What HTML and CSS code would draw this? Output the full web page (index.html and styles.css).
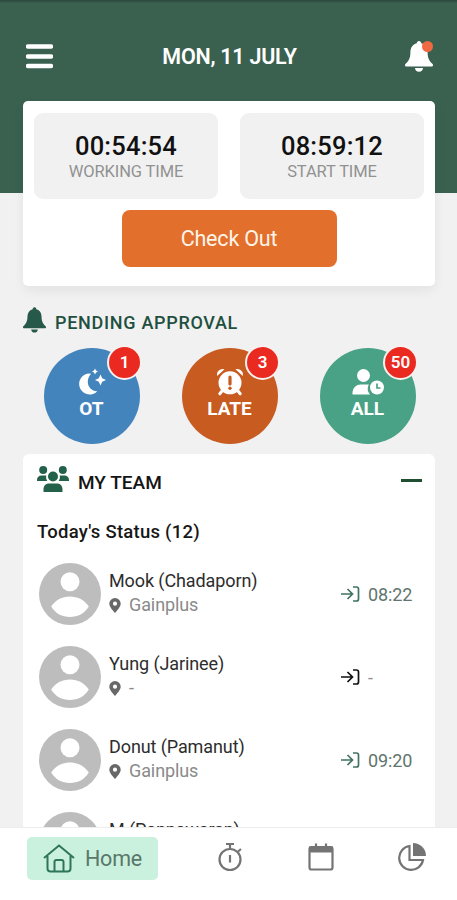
FILE: index.html
```html
<!DOCTYPE html>
<html lang="en">
<head>
<meta charset="utf-8">
<meta name="viewport" content="width=device-width, initial-scale=1">
<title>Attendance</title>
<link rel="stylesheet" href="styles.css">
</head>
<body>
<svg class="defs" width="0" height="0">
  <symbol id="bell" viewBox="0 0 28 31"><path d="M14 0c-1.400 0-2.200 1-2.200 2.300C7.500 3.400 5.400 7 5.400 11.500c0 6-2 9-5 11.500-.8.800-.4 2.500 1 2.500h25.200c1.400 0 1.800-1.700 1-2.500-3-2.500-5-5.500-5-11.500 0-4.500-2.100-8.100-6.400-9.200C16.200 1 15.400 0 14 0zM10 27h8c0 2.200-1.700 3.800-4 3.800S10 29.200 10 27z"/></symbol>
  <symbol id="avatar" viewBox="0 0 62 62"><circle cx="31" cy="31" r="31" fill="#bdbdbd"/><circle cx="31" cy="18.800" r="9.500" fill="#fff"/><path d="M12.200 43.500C16.500 37 23 33.500 31 33.500s14.500 3.500 18.800 10C45.500 50.500 39 54 31 54s-14.500-3.500-18.800-10.500z" fill="#fff"/></symbol>
  <symbol id="pin" viewBox="0 0 12 15"><path fill-rule="evenodd" d="M6 0a5.700 5.700 0 0 0-5.700 5.700C.300 9 4.500 13 6 15c1.500-2 5.700-6 5.700-9.300A5.700 5.700 0 0 0 6 0zm0 3.600a2.100 2.100 0 1 1 0 4.200 2.100 2.100 0 0 1 0-4.200z"/></symbol>
  <symbol id="enter" viewBox="0 0 19 16"><path d="M0 8h11.500M6.500 3l5 5-5 5M12 1h3.500q2 0 2 2v10q0 2-2 2H12" fill="none" stroke="currentColor" stroke-width="1.700"/></symbol>
</svg>
<div class="screen">
  <header class="topbar">
    <svg class="menu" viewBox="0 0 27 25"><path d="M2 2.500h23M2 12.500h23M2 22h23"/></svg>
    <h1 class="date">MON, 11 JULY</h1>
    <div class="alerts"><svg class="alert-bell"><use href="#bell"/></svg><span class="dot"></span></div>
  </header>

  <section class="clock">
    <div class="tiles">
      <div class="tile"><b class="tile-time">00:54:54</b><span class="tile-label">WORKING TIME</span></div>
      <div class="tile"><b class="tile-time">08:59:12</b><span class="tile-label">START TIME</span></div>
    </div>
    <button class="checkout">Check Out</button>
  </section>

  <h2 class="pending"><svg class="pending-bell"><use href="#bell"/></svg><span>PENDING APPROVAL</span></h2>
  <div class="approvals">
    <div class="approval blue">
      <svg class="approval-icon" viewBox="0 0 32 28"><path d="M13.500 5.500a10.500 10.500 0 1 0 7.800 17.700C13.500 23.500 8 14 15 5.800zM19 .500l1 2 2 1-2 1-1 2-1-2-2-1 2-1zM24.500 6.500l1.700 3.800L30 12l-3.800 1.700-1.700 3.800-1.700-3.800L19 12l3.800-1.700z"/></svg>
      <span>OT</span><em class="badge">1</em>
    </div>
    <div class="approval orange">
      <svg class="approval-icon" viewBox="0 0 32 28"><path d="M3.200 8C2 3.500 6.500 0 10.500 1.200zM28.800 8C30 3.500 25.500 0 21.500 1.200z"/><circle cx="16" cy="14.800" r="11.500"/><path class="rounded" d="M8 23l-2.200 2.800M24 23l2.200 2.800"/><path class="mark" d="M16 9v7"/><circle class="mark-dot" cx="16" cy="20.300" r="1.700"/></svg>
      <span>LATE</span><em class="badge">3</em>
    </div>
    <div class="approval green">
      <svg class="approval-icon" viewBox="0 0 32 28"><circle cx="11.500" cy="7.500" r="6.500"/><path d="M.500 26.500V24a8 8 0 0 1 8-7.500h8.300a9 9 0 0 0 1.200 10z"/><circle cx="25" cy="19.500" r="7"/><path class="hands" d="M25 15.500v4.500h3.500"/></svg>
      <span>ALL</span><em class="badge">50</em>
    </div>
  </div>

  <section class="team">
    <div class="team-head">
      <svg class="team-icon" viewBox="0 0 32 26"><circle cx="6.200" cy="4" r="4"/><circle cx="25.800" cy="4" r="4"/><circle cx="16" cy="10.500" r="5"/><path d="M0 15v-1c0-3 2-4.500 4.500-4.500h4.800c-.5 2 0 4 1 5.500zM32 15v-1c0-3-2-4.500-4.500-4.500h-4.800c.5 2 0 4-1 5.500zM6.500 26v-2.500c0-4 2.500-6 5.500-6h8c3 0 5.500 2 5.500 6V26z"/></svg>
      <h2>MY TEAM</h2><span class="collapse"></span>
    </div>
    <h3>Today's Status (12)</h3>
    <ul class="members">
      <li class="member"><svg class="avatar"><use href="#avatar"/></svg><div class="who"><span class="name">Mook (Chadaporn)</span><span class="place"><svg class="pin"><use href="#pin"/></svg>Gainplus</span></div><div class="checkin"><svg class="enter"><use href="#enter"/></svg>08:22</div></li>
      <li class="member"><svg class="avatar"><use href="#avatar"/></svg><div class="who"><span class="name">Yung (Jarinee)</span><span class="place"><svg class="pin"><use href="#pin"/></svg>-</span></div><div class="checkin missing"><svg class="enter"><use href="#enter"/></svg>-</div></li>
      <li class="member"><svg class="avatar"><use href="#avatar"/></svg><div class="who"><span class="name">Donut (Pamanut)</span><span class="place"><svg class="pin"><use href="#pin"/></svg>Gainplus</span></div><div class="checkin"><svg class="enter"><use href="#enter"/></svg>09:20</div></li>
      <li class="member"><svg class="avatar"><use href="#avatar"/></svg><div class="who"><span class="name">M (Pannawaran)</span></div></li>
    </ul>
  </section>

  <nav class="tabs">
    <a class="tab home"><svg class="house" viewBox="0 0 32 29"><path d="M1 14L16 1.500 31 14M4.500 12v12.500q0 3 3 3h17q3 0 3-3V12M11.500 27V18q0-2 2-2h5q2 0 2 2v9"/></svg><span>Home</span></a>
    <a class="tab"><svg class="tab-icon" viewBox="0 0 28 30"><circle cx="14" cy="17.500" r="10.500"/><path d="M10 2h8M14 2v5M22 9.500l3-2.500M14 13v7.500"/></svg></a>
    <a class="tab"><svg class="tab-icon" viewBox="0 0 28 30"><rect x="2.500" y="5" width="23" height="22.500" rx="2"/><path class="solid" d="M2 4.500h24v6H2z"/><path d="M9 1.500v4M19 1.500v4"/></svg></a>
    <a class="tab"><svg class="tab-icon" viewBox="0 0 28 30"><path d="M11.500 4A12 12 0 1 0 25 18H11.500z"/><path class="solid" d="M15 1A13 13 0 0 1 28 14H15z"/></svg></a>
  </nav>
</div>
</body>
</html>
```
FILE: styles.css
```css
* { box-sizing: border-box; margin: 0; padding: 0; }
body { font-family: Roboto, "Liberation Sans", sans-serif; background: #f1f1f1; overflow: hidden; white-space: nowrap; }
svg { display: block; flex: none; fill: currentColor; }
.defs { position: absolute; }
.screen { width: 457px; height: 900px; display: flex; flex-direction: column; overflow: hidden; background: linear-gradient(#2c4b3e 0 1px, #3a6150 3px 192.500px, #f1f1f1 193px); }

.topbar { height: 101px; flex: none; display: grid; grid-template-columns: 60px 1fr 60px; align-items: center; padding: 11px 24px 0 26px; color: #fff; }
.menu { width: 27px; height: 25px; stroke: #fff; stroke-width: 4.600; stroke-linecap: round; }
.date { font-size: 21.500px; font-weight: 600; text-align: center; line-height: 26px; letter-spacing: -.25px; padding-top: 1px; }
.alerts { position: relative; justify-self: end; }
.alert-bell { width: 28px; height: 31px; }
.dot { position: absolute; right: 0; top: 0; width: 11px; height: 11px; border-radius: 50%; background: #ef6a43; }

.clock { height: 185px; flex: none; margin: 0 22px 0 23px; padding: 12px 11px 0; background: #fff; border-radius: 5px; box-shadow: 0 5px 12px rgba(0,0,0,.06); display: flex; flex-direction: column; align-items: center; }
.tiles { align-self: stretch; display: grid; grid-template-columns: 1fr 1fr; gap: 22px; }
.tile { height: 86px; border-radius: 9px; background: #f1f1f1; display: flex; flex-direction: column; align-items: center; padding-top: 18px; }
.tile-time { font-size: 25.500px; font-weight: 500; line-height: 30px; color: #111; letter-spacing: .2px; }
.tile-label { font-size: 16.500px; line-height: 22px; color: #919191; letter-spacing: -.1px; }
.checkout { margin-top: 11px; width: 215px; height: 57px; border: 0; border-radius: 8px; background: #e26f2c; color: #fff4e8; font: 400 21.500px/57px Roboto, sans-serif; letter-spacing: -.2px; }

.pending { flex: none; display: flex; align-items: center; gap: 9px; margin: 21px 0 0 23px; height: 26px; font-size: 18px; font-weight: 500; letter-spacing: .7px; color: #1f503f; }
.pending span { padding-top: 5px; }
.pending-bell { width: 23px; height: 26px; color: #26594a; }
.approvals { flex: none; display: flex; gap: 42px; margin: 15px 0 0 43.500px; height: 97px; }
.approval { position: relative; width: 96px; height: 96px; border-radius: 50%; color: #fff; display: flex; flex-direction: column; align-items: center; padding-top: 20px; font-size: 19px; font-weight: 700; line-height: 25px; }
.blue { background: #4484bd; }
.orange { background: #c75b20; }
.green { background: #49a285; }
.approval-icon { width: 32px; height: 28px; }
.rounded { stroke: #fff; stroke-width: 3; stroke-linecap: round; }
.mark { stroke: #c75b20; stroke-width: 3.200; stroke-linecap: round; }
.mark-dot { fill: #c75b20; }
.hands { fill: none; stroke: #49a285; stroke-width: 1.700; }
.badge { position: absolute; left: 63.500px; top: -3px; width: 35px; height: 35px; border: 2px solid #f7f1f0; border-radius: 50%; background: #ea2a20; font-style: normal; font-size: 17px; line-height: 31px; font-weight: 600; text-align: center; }

.team { flex: 1; min-height: 0; overflow: hidden; margin: 9px 22px 0 23px; padding: 12px 13px 0 14px; background: #fff; border-radius: 6px 6px 0 0; }
.team-head { display: flex; height: 27px; gap: 9px; color: #24614a; }
.team-icon { width: 32px; height: 26px; }
.team h2 { font-size: 19px; font-weight: 500; line-height: 33px; color: #151515; }
.collapse { margin: 13px 0 0 auto; width: 21px; height: 3px; background: #1f4f30; }
.team h3 { font-size: 18.500px; font-weight: 500; line-height: 24px; margin-top: 27px; color: #171717; letter-spacing: .25px; }
.members { list-style: none; margin-top: 19px; }
.member { height: 83px; display: flex; padding-left: 2px; }
.avatar { width: 62px; height: 62px; }
.who { margin-left: 8px; display: flex; flex-direction: column; padding-top: 6px; }
.name { font-size: 18px; line-height: 24px; color: #2d2d2d; letter-spacing: -.1px; }
.place { font-size: 18px; line-height: 24px; color: #8a8a8a; display: flex; align-items: center; letter-spacing: -.1px; }
.pin { width: 12px; height: 15px; margin-right: 8px; color: #686868; }
.checkin { width: 81px; height: 62px; margin-left: auto; display: flex; align-items: center; font-size: 18px; letter-spacing: -.1px; color: #60756d; }
.enter { width: 19px; height: 16px; margin-right: 8px; color: #407363; }
.missing { color: #929292; }
.missing .enter { color: #111; }

.tabs { height: 73px; flex: none; background: #fff; border-top: 1px solid #ededed; display: grid; grid-template-columns: 131px 26px 1fr 1fr 1fr; align-items: start; padding: 9px 0 0 27px; color: #747474; }
.tab { height: 43px; display: flex; align-items: center; justify-content: center; }
.home { grid-column: 1 / 2; border-radius: 5px; background: #caf1dd; color: #59776b; font-size: 21.500px; letter-spacing: -.2px; gap: 10px; }
.home + .tab { grid-column: 3; }
.house { width: 32px; height: 29px; fill: none; stroke: #2f7559; stroke-width: 2; }
.tab-icon { width: 28px; height: 30px; margin-top: -3px; fill: none; stroke: #747474; stroke-width: 2.200; }
.solid { fill: #747474; stroke: none; }
```
